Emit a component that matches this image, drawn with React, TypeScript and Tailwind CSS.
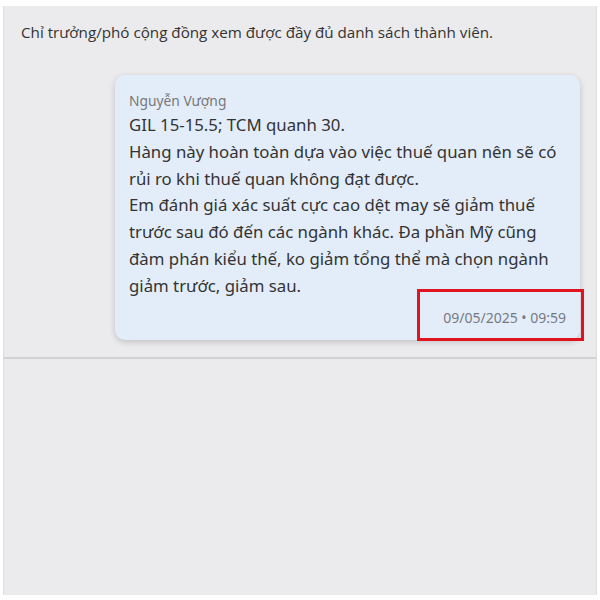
import React from "react";

export default function App() {
  const lines = [
    "GIL 15-15.5; TCM quanh 30.",
    "Hàng này hoàn toàn dựa vào việc thuế quan nên sẽ có",
    "rủi ro khi thuế quan không đạt được.",
    "Em đánh giá xác suất cực cao dệt may sẽ giảm thuế",
    "trước sau đó đến các ngành khác. Đa phần Mỹ cũng",
    "đàm phán kiểu thế, ko giảm tổng thể mà chọn ngành",
    "giảm trước, giảm sau.",
  ];
  return (
    <div className="w-[600px] h-[600px] bg-white pt-[6px] px-[3px] overflow-hidden" style={{ fontFamily: '"Noto Sans", sans-serif' }}>
      <div className="h-[589px] bg-[#ebebed] border-x border-[#dcdcdf] flex flex-col">
        <div className="pl-[17px] pt-[16px] text-[15.2px] leading-[20px] text-[#333]" style={{ fontFamily: '"Open Sans", sans-serif' }}>
          Chỉ trưởng/phó cộng đồng xem được đầy đủ danh sách thành viên.
        </div>
        <div className="flex justify-end pr-[16px] pt-[33px]">
          <div className="relative w-[465px] rounded-[10px] bg-[#e3edfa] shadow-[0_2px_6px_rgba(0,0,0,0.18)] pl-[14px] pr-[14px] pt-[17px] pb-[13px]">
            <div className="text-[13.8px] leading-[18px] text-[#777]">Nguyễn Vượng</div>
            <div className="mt-[2px] text-[16.8px] leading-[26.8px] text-[#333]">
              {lines.map((l, i) => (
                <div key={i} className="whitespace-nowrap">{l}</div>
              ))}
            </div>
            <div className="flex justify-end mt-[9px] text-[14px] leading-[18px] text-[#757a82]">
              09/05/2025 • 09:59
            </div>
            <div className="absolute right-[-4px] bottom-[-1px] w-[167px] h-[52px] border-[3px] border-[#e0141e]" />
          </div>
        </div>
        <div className="mt-[17px] h-[2px] bg-[#d2d2d4]" />
        <div className="flex-1" />
      </div>
    </div>
  );
}
